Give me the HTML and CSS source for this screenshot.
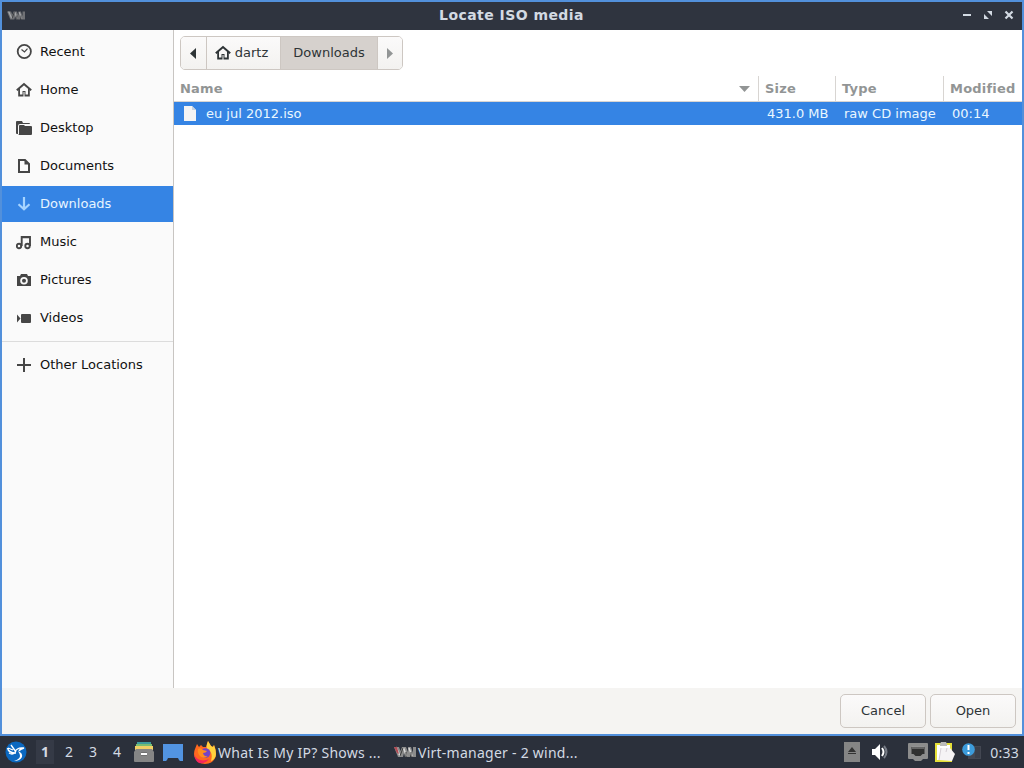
FILE: index.html
```
<!DOCTYPE html>
<html lang="en">
<head>
    <meta charset="UTF-8">
    <meta name="viewport" content="width=device-width, initial-scale=1.0">
    <title>Locate ISO media</title>
    <link rel="stylesheet" href="styles.css">
</head>
<body>

<svg class="defs" width="0" height="0">
    <symbol id="house" viewBox="0 0 16 16">
        <path d="M.8 8.300 8 2l7.200 6.300" fill="none" stroke="currentColor" stroke-width="2"/>
        <path d="M2.200 7.500 4 6v6.500h2.500V9h3v3.500H12V6l1.800 1.500v7H8.500V10h-1v4.500H2.200z" fill="currentColor"/>
    </symbol>
    <symbol id="vm" viewBox="0 0 22 12">
        <path d="M0 1h5l1.500 4L8 1h4l2 5V1h3l2 6V1h3v10h-5l-1-3v3h-5l-1-4-1 4H4z" fill="#8c8c8c"/>
        <path d="M2 1l4 9M9.500 2l3 8M15 2l3 8" stroke="#d8d8d8" stroke-width="1.600"/>
        <path d="M6 10l3-8M12 6v5M17 6v5" stroke="#3c3c3c" stroke-width="1"/>
    </symbol>
</svg>

<div class="window">
    <div class="titlebar">
        <svg class="app-icon" width="18" height="11" viewBox="0 0 22 12"><use href="#vm"/></svg>
        <h1>Locate ISO media</h1>
        <div class="window-buttons">
            <svg width="10" height="10" viewBox="0 0 10 10"><path d="M1 5h8" stroke="#d3dae3" stroke-width="2"/></svg>
            <svg width="10" height="10" viewBox="0 0 10 10"><path d="M4 1h5v5zM1 4v5h5z" fill="#d3dae3"/></svg>
            <svg width="10" height="10" viewBox="0 0 10 10"><path d="M1.500 1.500l7 7M8.500 1.500l-7 7" stroke="#d3dae3" stroke-width="2.200"/></svg>
        </div>
    </div>

    <div class="main">
        <ul class="sidebar">
            <li>
                <svg width="16" height="16" viewBox="0 0 16 16" fill="none" stroke="currentColor"><circle cx="8.300" cy="7.500" r="6.600" stroke-width="1.800"/><path d="M5.500 5.500l3 2.500 3-3.300" stroke-width="1.200"/></svg>
                <span>Recent</span>
            </li>
            <li>
                <svg width="16" height="16"><use href="#house"/></svg>
                <span>Home</span>
            </li>
            <li>
                <svg width="16" height="16" viewBox="0 0 16 16" fill="currentColor"><path d="M0 2q0-1 1-1h5l1 2h6q1 0 1 1H4Q2 4 2 6v8H1q-1 0-1-1z"/><path d="M3 6q0-1 1-1h4l1 1h6q1 0 1 1v7q0 1-1 1H1.500q1.500 0 1.500-1z"/></svg>
                <span>Desktop</span>
            </li>
            <li>
                <svg width="16" height="16" viewBox="0 0 16 16"><path d="M3 2h6l4 4v8H3z" fill="none" stroke="currentColor" stroke-width="2"/><path d="M8.500 2v4.500H13z" fill="currentColor"/></svg>
                <span>Documents</span>
            </li>
            <li class="active">
                <svg width="16" height="16" viewBox="0 0 16 16" fill="none" stroke="currentColor" stroke-width="2.200"><path d="M8 1v12M2.500 8.300l5.500 5 5.500-5"/></svg>
                <span>Downloads</span>
            </li>
            <li>
                <svg width="16" height="16" viewBox="0 0 16 16" fill="none" stroke="currentColor" stroke-width="1.900"><circle cx="3" cy="12" r="2.200"/><circle cx="11.500" cy="12" r="2.200"/><path d="M5.700 12V3h8.300v9M5.700 3.300H14"/></svg>
                <span>Music</span>
            </li>
            <li>
                <svg width="16" height="16" viewBox="0 0 16 16"><path d="M1 4h3l1-2h6l1 2h3v10H1z" fill="currentColor"/><circle cx="8" cy="8.800" r="2.900" fill="none" stroke="#fafafa" stroke-width="1.800"/></svg>
                <span>Pictures</span>
            </li>
            <li>
                <svg width="16" height="16" viewBox="0 0 16 16" fill="currentColor"><path d="M1 4.500l3.500 4L1 12.500z"/><rect x="5" y="4" width="10" height="9" rx="1"/></svg>
                <span>Videos</span>
            </li>
            <li class="other">
                <svg width="16" height="16" viewBox="0 0 16 16"><path d="M8 0v14M1 7h14" stroke="currentColor" stroke-width="2"/></svg>
                <span>Other Locations</span>
            </li>
        </ul>

        <div class="content">
            <div class="pathbar">
                <button class="back"><svg width="6" height="11" viewBox="0 0 6 11"><path d="M6 0v11L0 5.500z" fill="#2e3436"/></svg></button>
                <button class="parent"><svg width="16" height="16"><use href="#house"/></svg><span>dartz</span></button>
                <button class="current"><span>Downloads</span></button>
                <button class="forward"><svg width="6" height="11" viewBox="0 0 6 11"><path d="M0 0v11l6-5.500z" fill="#929595"/></svg></button>
            </div>

            <div class="row header">
                <div class="cell sorted"><span>Name</span><svg width="11" height="6" viewBox="0 0 11 6"><path d="M0 0h11L5.500 6z" fill="#929595"/></svg></div>
                <div class="cell"><span>Size</span></div>
                <div class="cell"><span>Type</span></div>
                <div class="cell"><span>Modified</span></div>
            </div>
            <div class="row file">
                <div class="cell name">
                    <svg width="12" height="15" viewBox="0 0 12 15"><path d="M0 0h8l4 4v11H0z" fill="#f4f4f4"/><path d="M8 0v4h4z" fill="#c9d3df"/></svg>
                    <span>eu jul 2012.iso</span>
                </div>
                <div class="cell"><span>431.0 MB</span></div>
                <div class="cell"><span>raw CD image</span></div>
                <div class="cell"><span>00:14</span></div>
            </div>
        </div>
    </div>

    <div class="actions">
        <button>Cancel</button>
        <button>Open</button>
    </div>
</div>

<div class="taskbar">
    <svg class="menu" width="22" height="22" viewBox="0 0 22 22"><circle cx="11" cy="11" r="10.500" fill="#0b68c0"/><path d="M6 4l5 7M2.500 7q1 5 8.500 5M3 7l5 2M10 11q2-5 9-4-4 1-5 3M4 12q3 2 6 0" fill="none" stroke="#fff" stroke-width="1.300"/><path d="M13 10q5 2 4 6-2 4-8 4 6-2 6-5 0-2-2-5z" fill="#fff"/></svg>
    <div class="desks">
        <span class="on">1</span>
        <span>2</span>
        <span>3</span>
        <span>4</span>
    </div>
    <svg class="files" width="20" height="22" viewBox="0 0 20 22"><path d="M3 1h14v3H3z" fill="#3d9b9b"/><path d="M2 3h16v2H2z" fill="#79bd72"/><path d="M1 5h18v4H1z" fill="#f0cf65"/><path d="M2 8h16l2 3v9q0 1-1 1H1q-1 0-1-1v-9z" fill="#858585"/><path d="M7 13h6" stroke="#707070" stroke-width="4"/><path d="M7 13h6" stroke="#fff" stroke-width="2"/></svg>
    <svg class="show-desktop" width="20" height="17" viewBox="0 0 20 17"><path d="M0 0h20v17h-3l-1-1-1-2H5l-1 2-1 1H0z" fill="#5294e2"/></svg>
    <div class="task firefox">
        <svg width="22" height="23" viewBox="0 0 22 23">
            <path d="M1 8l2-5 2 3 2-2 2 2h3l2-6 3 5 2 1 1-2q2 4 2 9c0 6-5 10-11 10S0 18 0 13q0-3 1-5z" fill="#ff681f"/>
            <path d="M14 0l3 5 2 1 1-2q2 5 2 9c0 3-2 6-5 7 2-7 0-10-4-12-1-3 0-5 1-8z" fill="#ffd23d"/>
            <path d="M0 13c2 6 9 8 15 5-3 4-7 5-10 4q-4-2-5-9z" fill="#f5265c"/>
            <circle cx="11.500" cy="12" r="4.800" fill="#7544c5"/><path d="M4 8q3-2 5 1l4 1q-1 2-4 2 1 4 5 3-5 4-9-1-2-3-1-6z" fill="#ff8d1c"/>
        </svg>
        <span>What Is My IP? Shows ...</span>
    </div>
    <div class="task virt">
        <svg width="22" height="12" viewBox="0 0 22 12"><use href="#vm"/><path d="M0 1h3l2 7-2-1z" fill="#b04b55"/></svg>
        <span>Virt-manager - 2 wind...</span>
    </div>
    <div class="tray">
        <svg width="16" height="20" viewBox="0 0 16 20"><path d="M0 0h16v20H0z" fill="#858585"/><path d="M8 5l4 5H4zM4 11h8v1H4z" fill="#333"/></svg>
        <svg class="volume" width="17" height="16" viewBox="0 0 17 16"><path d="M0 5h3l5-5v16l-5-5H0z" fill="#fff"/><path d="M10 4q3 4 0 8" fill="none" stroke="#fff" stroke-width="2"/><path d="M12 2q5 6 0 12" fill="none" stroke="#777c86" stroke-width="2"/></svg>
        <svg class="network" width="20" height="18" viewBox="0 0 20 18"><path d="M1 0h18q1 0 1 1v14q0 1-1 1h-4l-2 2H7l-2-2H1q-1 0-1-1V1q0-1 1-1z" fill="#8c8c8c"/><path d="M3.500 4h13v7h-2l-2 2h-5l-2-2h-2z" fill="#303030"/><path d="M5 3v3M7 3v3M9 3v3M11 3v3M13 3v3M15 3v3" stroke="#999"/></svg>
        <svg class="clipboard" width="20" height="22" viewBox="0 0 20 22"><path d="M0 2h17v19H0z" fill="#e5df38"/><path d="M2 4h13v15H2z" fill="#fff"/><path d="M5 3l1-2h5l1 2v2H5z" fill="#bbb"/><path d="M6 7h9l5 6-3 7-13-1z" fill="#f5f3f5"/><path d="M6 7L4 19M12 7l-1 4" fill="none" stroke="#d5cfd5"/></svg>
        <svg class="notice" width="20" height="18" viewBox="0 0 20 18"><path d="M6 3h13v13H6z" fill="#434752"/><path d="M13 4h5v11h-5z" fill="#3a3e49"/><circle cx="6.500" cy="6.500" r="6.300" fill="#3c9bdb"/><path d="M6.500 2v5M6.500 9v2" stroke="#fff" stroke-width="2"/></svg>
        <span class="clock">0:33</span>
    </div>
</div>

</body>
</html>
```
FILE: styles.css
```
* {
    box-sizing: border-box;
}

body {
    margin: 0;
    width: 1024px;
    height: 768px;
    overflow: hidden;
    font-family: "DejaVu Sans", sans-serif;
    font-size: 13px;
    color: #1a1a1a;
}

svg {
    display: block;
    flex-shrink: 0;
}

.defs {
    display: none;
}

.window {
    height: 736px;
    border: 2px solid #5290db;
    display: flex;
    flex-direction: column;
    background-color: #fff;
}

.titlebar {
    height: 28px;
    flex-shrink: 0;
    display: grid;
    grid-template-columns: 80px 1fr 80px;
    align-items: center;
    background-color: #2f343f;
    color: #d3dae3;
}

.titlebar h1 {
    margin: 0;
    padding: 0 1px 2px 0;
    font-size: 14px;
    letter-spacing: 0.45px;
    text-align: center;
}

.app-icon {
    margin: 0 0 2px 5px;
    opacity: 0.7;
}

.window-buttons {
    display: flex;
    justify-content: flex-end;
    gap: 11px;
    padding: 0 8px 2px 0;
}

.main {
    display: flex;
    height: 658px;
}

.sidebar {
    width: 172px;
    margin: 0;
    padding: 4px 0 0;
    list-style: none;
    background-color: #fafafa;
    border-right: 1px solid #c8c5c2;
    color: #111;
}

.sidebar li {
    display: flex;
    align-items: center;
    gap: 8px;
    height: 36px;
    padding-left: 14px;
    margin-bottom: 2px;
}

.sidebar li span {
    padding-bottom: 2px;
}

.sidebar svg {
    color: #464646;
}

.sidebar .active {
    background-color: #3584e4;
    color: #e6f4ff;
}

.sidebar .active svg {
    color: #a6d4ff;
}

.sidebar .other {
    height: 48px;
    margin-top: 5px;
    border-top: 1px solid #dcdcdc;
}

.content {
    flex: 1;
}

.pathbar {
    display: flex;
    width: 223px;
    height: 34px;
    margin: 6px 0 6px 6px;
    border: 1px solid #cdc7c2;
    border-radius: 5px;
    overflow: hidden;
}

button {
    font-family: inherit;
    font-size: 13px;
    color: #2e3436;
    background: linear-gradient(#fbfafa, #f3f2f0);
}

.pathbar button {
    display: flex;
    align-items: center;
    justify-content: center;
    padding: 0;
    border: none;
    border-right: 1px solid #cdc7c2;
}

.pathbar button span {
    padding-bottom: 1px;
}

.pathbar .back {
    width: 26px;
    padding-right: 2px;
}

.pathbar .parent {
    width: 74px;
    padding-right: 4px;
    gap: 4px;
}

.pathbar .current {
    width: 97px;
    background: #d6d1cd;
}

.pathbar .forward {
    flex: 1;
    border-right: none;
}

.row {
    display: grid;
    grid-template-columns: 585px 77px 108px 1fr;
}

.cell {
    display: flex;
    align-items: center;
}

.header {
    height: 26px;
    border-bottom: 1px solid #d8d5d2;
    color: #929595;
    font-weight: bold;
    letter-spacing: 0.2px;
}

.header .cell {
    padding-left: 6px;
    border-right: 1px solid #d8d5d2;
}

.header .cell:last-child {
    border-right: none;
}

.header .sorted {
    justify-content: space-between;
    padding-right: 8px;
}

.file {
    height: 23px;
    background-color: #3584e4;
    color: #e9f7ff;
}

.file .cell {
    padding-left: 8px;
}

.file .name {
    gap: 10px;
    padding-left: 10px;
}

.actions {
    flex: 1;
    display: flex;
    justify-content: flex-end;
    gap: 4px;
    padding: 6px;
    background-color: #f5f4f2;
}

.actions button {
    width: 86px;
    height: 34px;
    padding: 0 0 1px;
    border: 1px solid #cdc7c2;
    border-radius: 5px;
}

.taskbar {
    display: flex;
    align-items: center;
    height: 32px;
    padding: 0 5px;
    background-color: #2b303b;
    color: #d3dae3;
    font-family: "Noto Sans", sans-serif;
    font-size: 14px;
}

.desks {
    display: flex;
    margin-left: 6px;
    text-align: center;
}

.desks span {
    width: 24px;
    line-height: 24px;
}

.desks .on {
    width: 18px;
    margin: 0 3px;
    font-weight: bold;
    background-color: #353a46;
}

.files {
    margin-left: 5px;
}

.show-desktop {
    margin-left: 9px;
}

.task {
    display: flex;
    align-items: center;
    white-space: nowrap;
    letter-spacing: 0.25px;
}

.firefox {
    width: 200px;
    margin-left: 11px;
    gap: 2px;
}

.virt {
    gap: 2px;
}

.tray {
    display: flex;
    align-items: center;
    margin-left: auto;
}

.volume {
    margin-left: 12px;
}

.network {
    margin-left: 19px;
}

.clipboard {
    margin-left: 7px;
}

.notice {
    margin-left: 7px;
}

.clock {
    margin-left: 8px;
    letter-spacing: 0.25px;
}
```
